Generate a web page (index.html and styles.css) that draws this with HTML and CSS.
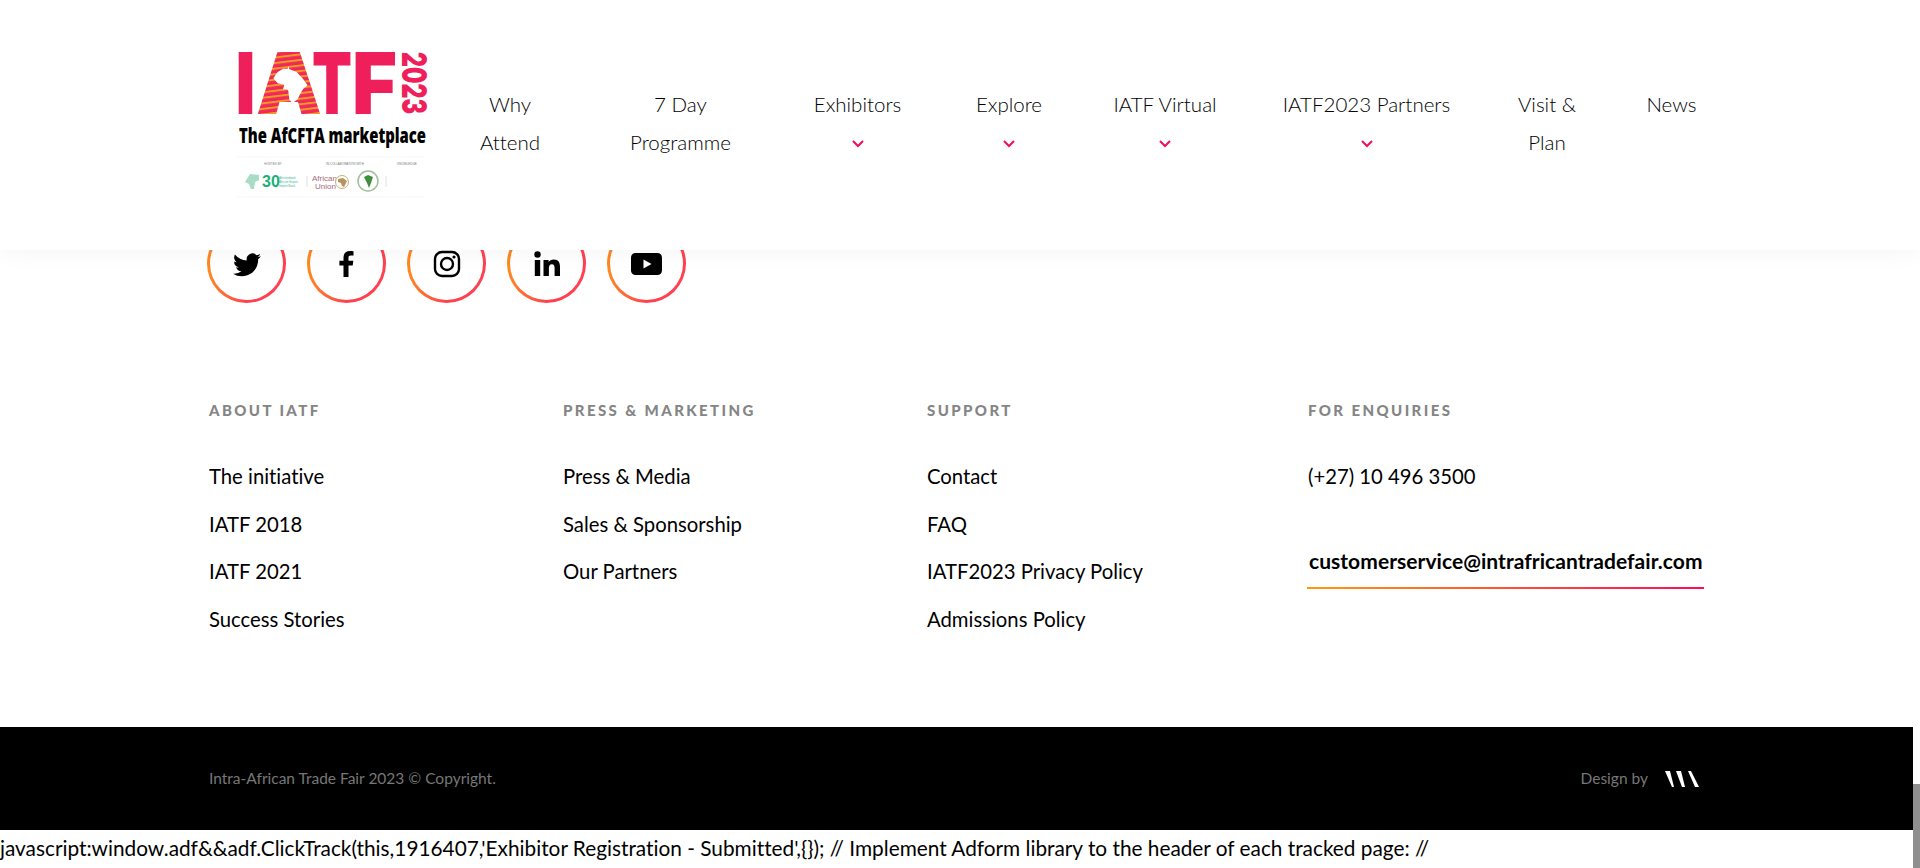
FILE: index.html
```html
<!DOCTYPE html>
<html lang="en">
<head>
<meta charset="utf-8">
<title>IATF 2023</title>
<link rel="stylesheet" href="styles.css">
</head>
<body>
<header class="site-header">
  <svg class="logo" width="198" height="180" viewBox="-6 -30 198 180">
    <defs>
      <pattern id="stripes" width="14" height="5.500" patternUnits="userSpaceOnUse" patternTransform="rotate(-7)">
        <rect width="14" height="5.500" fill="#f79a23"/>
        <rect y="2" width="14" height="3.500" fill="#ee2a5c"/>
      </pattern>
    </defs>
    <text class="logo-mark" x="-2.6" y="64" textLength="20" lengthAdjust="spacingAndGlyphs">I</text>
    <text class="logo-mark logo-a" x="18" y="64" textLength="66" lengthAdjust="spacingAndGlyphs">A</text>
    <text class="logo-mark" x="74" y="64" textLength="40" lengthAdjust="spacingAndGlyphs">T</text>
    <text class="logo-mark" x="114" y="64" textLength="45" lengthAdjust="spacingAndGlyphs">F</text>
    <path class="logo-africa" d="M50.300 18.700L58.700 22 65.300 29.300 69.700 35.300 65.300 38.700 62 44.300 59.700 49.300 54.300 53.300 51.300 49.300 50.300 41 47 35 39.700 33.300 35.300 28.300 39.700 22 45.300 18.700z"/>
    <text class="logo-year" transform="translate(164 2) rotate(90)" textLength="62" lengthAdjust="spacingAndGlyphs">2023</text>
    <text class="logo-tag" x="1" y="93" textLength="187" lengthAdjust="spacingAndGlyphs">The AfCFTA marketplace</text>
    <line class="logo-rule" x1="0" y1="107" x2="188" y2="107"/>
    <text class="logo-tiny" x="35" y="115">HOSTED BY</text>
    <text class="logo-tiny" x="107" y="115">IN COLLABORATION WITH</text>
    <text class="logo-tiny" x="169" y="115">KNOWLEDGE</text>
    <path class="logo-green-light" d="M7 132l5-8 9 1 0 5-4 2-1 7-3 0-2-5z"/>
    <text class="logo-30" x="24" y="137">30</text>
    <text class="logo-fine" x="41" y="129">Afreximbank</text>
    <text class="logo-fine" x="41" y="133">African Export</text>
    <text class="logo-fine" x="41" y="137">Import Bank</text>
    <line class="logo-sep" x1="69" y1="126" x2="69" y2="137"/>
    <text class="logo-au" x="74" y="131">African</text>
    <text class="logo-au" x="77" y="139">Union</text>
    <circle class="logo-gold" cx="104" cy="132" r="6.500"/>
    <path class="logo-gold-fill" d="M100 129l5-1 4 3-3 6-2-1-1-3-3-1z"/>
    <circle class="logo-seal" cx="130" cy="131" r="10"/>
    <path class="logo-green-dark" d="M126 127l4-2 5 2-2 6-2 5-2-5z"/>
    <line class="logo-sep" x1="148" y1="126" x2="148" y2="137"/>
    <line class="logo-rule" x1="0" y1="147" x2="188" y2="147"/>
  </svg>
  <nav class="main-nav">
    <a class="nav-item" href="#">Why<br>Attend</a>
    <a class="nav-item" href="#">7 Day<br>Programme</a>
    <a class="nav-item" href="#">Exhibitors<svg class="chev" width="12" height="38" viewBox="0 0 12 38"><path d="M1 18l5 5 5-5"/></svg></a>
    <a class="nav-item" href="#">Explore<svg class="chev" width="12" height="38" viewBox="0 0 12 38"><path d="M1 18l5 5 5-5"/></svg></a>
    <a class="nav-item" href="#">IATF Virtual<svg class="chev" width="12" height="38" viewBox="0 0 12 38"><path d="M1 18l5 5 5-5"/></svg></a>
    <a class="nav-item" href="#">IATF2023 Partners<svg class="chev" width="12" height="38" viewBox="0 0 12 38"><path d="M1 18l5 5 5-5"/></svg></a>
    <a class="nav-item" href="#">Visit &amp;<br>Plan</a>
    <a class="nav-item" href="#">News</a>
  </nav>
</header>

<div class="page">
  <div class="footer-main">
    <div class="social">
      <a class="social-btn" href="#" aria-label="Twitter"><svg width="28" height="28" viewBox="0 0 16 16"><path d="M5.026 15c6.038 0 9.341-5.003 9.341-9.334 0-.14 0-.282-.006-.422A6.685 6.685 0 0 0 16 3.542a6.658 6.658 0 0 1-1.889.518 3.301 3.301 0 0 0 1.447-1.817 6.533 6.533 0 0 1-2.087.793A3.286 3.286 0 0 0 7.875 6.03a9.325 9.325 0 0 1-6.767-3.429 3.289 3.289 0 0 0 1.018 4.382A3.323 3.323 0 0 1 .64 6.575v.045a3.288 3.288 0 0 0 2.632 3.218 3.203 3.203 0 0 1-.865.115 3.23 3.23 0 0 1-.614-.057 3.283 3.283 0 0 0 3.067 2.277A6.588 6.588 0 0 1 .78 13.58a6.32 6.32 0 0 1-.78-.045A9.344 9.344 0 0 0 5.026 15z"/></svg></a>
      <a class="social-btn" href="#" aria-label="Facebook"><svg width="28" height="28" viewBox="0 0 28 28"><path d="M10.500 27V15.600H6.400v-4.800h4.100V7.600C10.500 3.400 13 1 16.800 1c1.800 0 3.200.1 3.700.2v4.300h-2.600c-2 0-2.400.9-2.400 2.300v3h4.800l-.6 4.800h-4.200V27z"/></svg></a>
      <a class="social-btn" href="#" aria-label="Instagram"><svg width="28" height="28" viewBox="0 0 28 28"><rect class="ig" x="2" y="2" width="24" height="24" rx="7"/><circle class="ig" cx="14" cy="14" r="6"/><circle cx="21" cy="7" r="1.600"/></svg></a>
      <a class="social-btn" href="#" aria-label="LinkedIn"><svg width="28" height="28" viewBox="0 0 28 28"><circle cx="4.500" cy="4.500" r="3.200"/><rect x="1.800" y="10" width="5.400" height="16"/><path d="M10.500 10h5.100v2.300c.9-1.600 2.800-2.700 5.100-2.700 4.900 0 6.300 3 6.300 7.500V26h-5.400v-7.800c0-2.300-.5-4-2.700-4-2.400 0-3 1.800-3 4V26h-5.400z"/></svg></a>
      <a class="social-btn" href="#" aria-label="YouTube"><svg width="32" height="24" viewBox="0 0 32 24"><rect y="1" width="31" height="22" rx="4.500"/><path class="yt-play" d="M12.500 7.500l8 4.500-8 4.500z"/></svg></a>
    </div>

    <div class="columns">
      <section class="col">
        <h4 class="col-title">ABOUT IATF</h4>
        <a class="col-link" href="#">The initiative</a>
        <a class="col-link" href="#">IATF 2018</a>
        <a class="col-link" href="#">IATF 2021</a>
        <a class="col-link" href="#">Success Stories</a>
      </section>
      <section class="col">
        <h4 class="col-title">PRESS &amp; MARKETING</h4>
        <a class="col-link" href="#">Press &amp; Media</a>
        <a class="col-link" href="#">Sales &amp; Sponsorship</a>
        <a class="col-link" href="#">Our Partners</a>
      </section>
      <section class="col">
        <h4 class="col-title">SUPPORT</h4>
        <a class="col-link" href="#">Contact</a>
        <a class="col-link" href="#">FAQ</a>
        <a class="col-link" href="#">IATF2023 Privacy Policy</a>
        <a class="col-link" href="#">Admissions Policy</a>
      </section>
      <section class="col">
        <h4 class="col-title">FOR ENQUIRIES</h4>
        <a class="col-link" href="#">(+27) 10 496 3500</a>
        <a class="email" href="#">customerservice@intrafricantradefair.com</a>
      </section>
    </div>
  </div>

  <div class="footer-bar">
    <span class="bar-text">Intra-African Trade Fair 2023 © Copyright.</span>
    <span class="design-by">
      <span class="bar-text">Design by</span>
      <svg width="34" height="16" viewBox="0 0 34 16"><path d="M0 0h5l4 16H7zM11 0h5l4 16h-3zM23 0h3l8 16h-4z"/></svg>
    </span>
  </div>
</div>

<p class="tracking">javascript:window.adf&amp;&amp;adf.ClickTrack(this,1916407,'Exhibitor Registration - Submitted',{}); // Implement Adform library to the header of each tracked page: //</p>
<div class="scroll-thumb"></div>
</body>
</html>
```

FILE: styles.css
```css
* { box-sizing: border-box; }
html, body { height: 868px; overflow: hidden; }
body {
  margin: 0;
  background: #fff;
  color: #000;
  font-family: "Lato", "Open Sans", sans-serif;
  font-variant-ligatures: none;
  position: relative;
}
a { color: inherit; text-decoration: none; }

.site-header {
  position: absolute;
  top: 0; left: 0; right: 0;
  height: 250px;
  background: #fff;
  box-shadow: 0 0 24px rgba(0,0,0,.05);
  display: flex;
  align-items: flex-start;
  padding: 20px 0 0 232px;
  z-index: 5;
}
.logo { flex: none; }
.logo-mark { font: 900 85px "Inter", sans-serif; fill: #ee1f5b; }
.logo-a { fill: url(#stripes); }
.logo-africa { fill: #fff; }
.logo-year { font: 900 34px "Inter", sans-serif; fill: #ee1f5b; }
.logo-tag { font: 800 21px "Open Sans", sans-serif; fill: #000; }
.logo-rule { stroke: #ddd; stroke-width: .6; stroke-dasharray: 1 1.500; }
.logo-tiny { font: 3px "Liberation Sans", sans-serif; fill: #777; text-anchor: middle; }
.logo-green-light { fill: #a8dcc4; }
.logo-30 { font: 700 16px "Liberation Sans", sans-serif; fill: #1bb07a; }
.logo-fine { font: 3px "Liberation Sans", sans-serif; fill: #4cb78f; }
.logo-sep { stroke: #ccc; stroke-width: .6; }
.logo-au { font: 8px "Liberation Sans", sans-serif; fill: #a56a7a; }
.logo-gold { fill: #fff; stroke: #c9b07a; stroke-width: 1; }
.logo-gold-fill { fill: #b8935a; }
.logo-seal { fill: #fff; stroke: #9fbf9a; stroke-width: 1.500; }
.logo-green-dark { fill: #3f8f3f; }

.main-nav {
  display: grid;
  grid-template-columns: 150px 191px 163px 140px 172px 231px 130px 119px;
  margin: 65px 0 0 5px;
  font-size: 20.500px;
  font-weight: 300;
  line-height: 38px;
  text-align: center;
  color: #000;
}
.nav-item { display: block; }
.chev { display: block; margin: 0 auto; }
.chev path { fill: none; stroke: #f20d5d; stroke-width: 2; }

.page { display: block; }
.footer-main { height: 727px; padding: 224px 0 0 207px; }
.social { display: flex; gap: 21px; }
.social-btn {
  width: 79px; height: 79px;
  border-radius: 50%;
  border: 3px solid transparent;
  background: linear-gradient(#fff, #fff) padding-box,
              linear-gradient(90deg, #ff8a1e, #ff4050 50%, #ff4050) border-box;
  display: flex; align-items: center; justify-content: center;
}
.social-btn svg { display: block; fill: #000; }
.social-btn .ig { fill: none; stroke: #000; stroke-width: 2.400; }
.social-btn .yt-play { fill: #fff; }

.columns {
  display: grid;
  grid-template-columns: 354px 364px 381px 400px;
  margin-top: 97px;
  margin-left: 1px;
}
.col { display: flex; flex-direction: column; align-items: flex-start; padding-left: 1px; }
.col-title {
  margin: 0 0 43px;
  height: 20px;
  font-size: 15px;
  line-height: 20px;
  font-weight: 900;
  letter-spacing: 2.400px;
  color: #858585;
}
.col-link {
  font-size: 20.300px;
  line-height: 27.600px;
  margin-bottom: 20px;
}
.email {
  margin-top: 36px;
  margin-left: -1px;
  padding: 0 1px 13px 2px;
  font-size: 21px;
  font-weight: 700;
  letter-spacing: .05px;
  line-height: 27px;
  border-bottom: 2px solid transparent;
  border-image: linear-gradient(90deg, #ff9a0a, #ff0a5c) 1;
}

.footer-bar {
  margin-right: 7px;
  height: 103px;
  background: #000;
  display: flex;
  justify-content: space-between;
  align-items: center;
  padding: 0 214px 2px 209px;
}
.bar-text { font-size: 15.500px; color: #777; }
.design-by { display: flex; align-items: center; gap: 17px; }
.design-by svg { display: block; fill: #fff; margin-top: 2px; }

.tracking {
  margin: 4px 0 0;
  font-size: 20.800px;
  line-height: 27px;
  white-space: nowrap;
}
.scroll-thumb {
  position: absolute;
  right: 0; top: 784px;
  width: 7px; height: 84px;
  background: #8f8f8f;
}
```
